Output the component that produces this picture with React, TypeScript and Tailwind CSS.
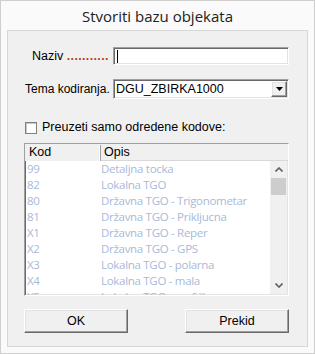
import React from 'react';

const ROWS = [
    { kod: '99', opis: 'Detaljna tocka' },
    { kod: '82', opis: 'Lokalna TGO' },
    { kod: '80', opis: 'Državna TGO - Trigonometar' },
    { kod: '81', opis: 'Državna TGO - Prikljucna' },
    { kod: 'X1', opis: 'Državna TGO - Reper' },
    { kod: 'X2', opis: 'Državna TGO - GPS' },
    { kod: 'X3', opis: 'Lokalna TGO - polarna' },
    { kod: 'X4', opis: 'Lokalna TGO - mala' },
    { kod: 'X5', opis: 'Lokalna TGO - grafička' },
];

const ui = { fontFamily: '"Liberation Sans", Arial, sans-serif' };
const seg = { fontFamily: '"Segoe UI", "Open Sans", "Noto Sans", sans-serif' };

// sunken 3D edge used by edit boxes and the list
const sunken =
    'border border-t-[#a0a0a0] border-l-[#a0a0a0] border-r-white border-b-white shadow-[inset_1px_1px_0_#696969,inset_-1px_-1px_0_#e3e3e3]';
const raised =
    'border border-t-white border-l-white border-r-[#696969] border-b-[#696969] shadow-[inset_-1px_-1px_0_#a0a0a0,inset_1px_1px_0_#e3e3e3]';

const Button: React.FC<{ label: string }> = ({ label }) => (
    <button className={`w-[104px] h-[24px] bg-[#f0f0f0] text-[12.5px] leading-[20px] text-black ${raised}`} style={ui}>
        {label}
    </button>
);

export default function App() {
    return (
        <div className="w-[315px] h-[354px] bg-[#fafafa] border border-[#cfcfcf] flex flex-col">
            {/* Title */}
            <div className="h-[29px] flex items-center justify-center text-[15px] leading-[20px] text-[#222]" style={seg}>
                Stvoriti bazu objekata
            </div>

            {/* Panel */}
            <div className="mx-[6px] h-[317px] bg-[#f0f0f0] border border-[#d7d7d7] px-[16px] flex flex-col text-[12.5px] leading-[15px] text-black" style={ui}>
                {/* Naziv */}
                <div className="flex items-center h-[18px] mt-[16px]">
                    <div className="w-[89px] pl-[8px] whitespace-nowrap">
                        Naziv <span className="text-[#b4431c] font-bold tracking-[0.35px]">...........</span>
                    </div>
                    <div className={`w-[176px] h-[18px] bg-white flex items-center pl-[3px] ${sunken}`}>
                        <div className="w-px h-[13px] bg-black" />
                    </div>
                </div>

                {/* Tema kodiranja */}
                <div className="flex items-center h-[20px] mt-[14px]">
                    <div className="w-[89px] pl-[1px] whitespace-nowrap text-[12px]">Tema kodiranja.</div>
                    <div className={`w-[176px] h-[20px] bg-white flex items-center ${sunken}`}>
                        <span className="flex-1 pl-[2px]">DGU_ZBIRKA1000</span>
                        <div className={`w-[16px] h-[16px] mr-px bg-[#f0f0f0] flex items-center justify-center ${raised}`}>
                            <svg width="7" height="4" viewBox="0 0 7 4">
                                <path d="M0 0h7L3.5 4z" fill="#000" />
                            </svg>
                        </div>
                    </div>
                </div>

                {/* Checkbox */}
                <div className="flex items-center h-[13px] mt-[22px] pl-[1px]">
                    <div className="w-[12px] h-[12px] bg-white border border-[#808080] shadow-[inset_1px_1px_0_#c8c8c8]" />
                    <span className="ml-[5px]">Preuzeti samo odredene kodove:</span>
                </div>

                {/* List */}
                <div className={`mt-[9px] w-[265px] h-[153px] bg-white flex flex-col overflow-hidden ${sunken}`}>
                    <div className="flex h-[17px] bg-[#f0f0f0] shrink-0 pt-px pl-px">
                        <div className="w-[75px] pl-[3px] border-r border-r-[#a0a0a0] shadow-[inset_-1px_0_0_#fff] leading-[15px]">Kod</div>
                        <div className="flex-1 pl-[3px] border-b border-b-[#d8d8d8] leading-[15px]">Opis</div>
                    </div>
                    <div className="flex flex-1 min-h-0">
                        <div className="flex-1 overflow-hidden text-[#a9b9d8] pl-[2px]" style={seg}>
                            {ROWS.map((r) => (
                                <div key={r.kod} className="flex h-[16px] items-center text-[11.5px] leading-[16px] tracking-[-0.3px]">
                                    <span className="w-[74px] shrink-0">{r.kod}</span>
                                    <span className="whitespace-nowrap">{r.opis}</span>
                                </div>
                            ))}
                        </div>
                        <div className="w-[17px] mr-px mb-px bg-[#f0f0f0] flex flex-col items-center">
                            <div className="h-[17px] flex items-center justify-center">
                                <svg width="8" height="5" viewBox="0 0 8 5">
                                    <path d="M0.5 4.5L4 1l3.5 3.5" stroke="#606060" strokeWidth="1.6" fill="none" />
                                </svg>
                            </div>
                            <div className="w-[15px] h-[17px] bg-[#cdcdcd]" />
                            <div className="flex-1" />
                            <div className="h-[17px] flex items-center justify-center">
                                <svg width="8" height="5" viewBox="0 0 8 5">
                                    <path d="M0.5 0.5L4 4l3.5-3.5" stroke="#606060" strokeWidth="1.6" fill="none" />
                                </svg>
                            </div>
                        </div>
                    </div>
                </div>

                {/* Buttons */}
                <div className="flex justify-between w-[265px] mt-[13px]">
                    <Button label="OK" />
                    <Button label="Prekid" />
                </div>
            </div>
        </div>
    );
}
